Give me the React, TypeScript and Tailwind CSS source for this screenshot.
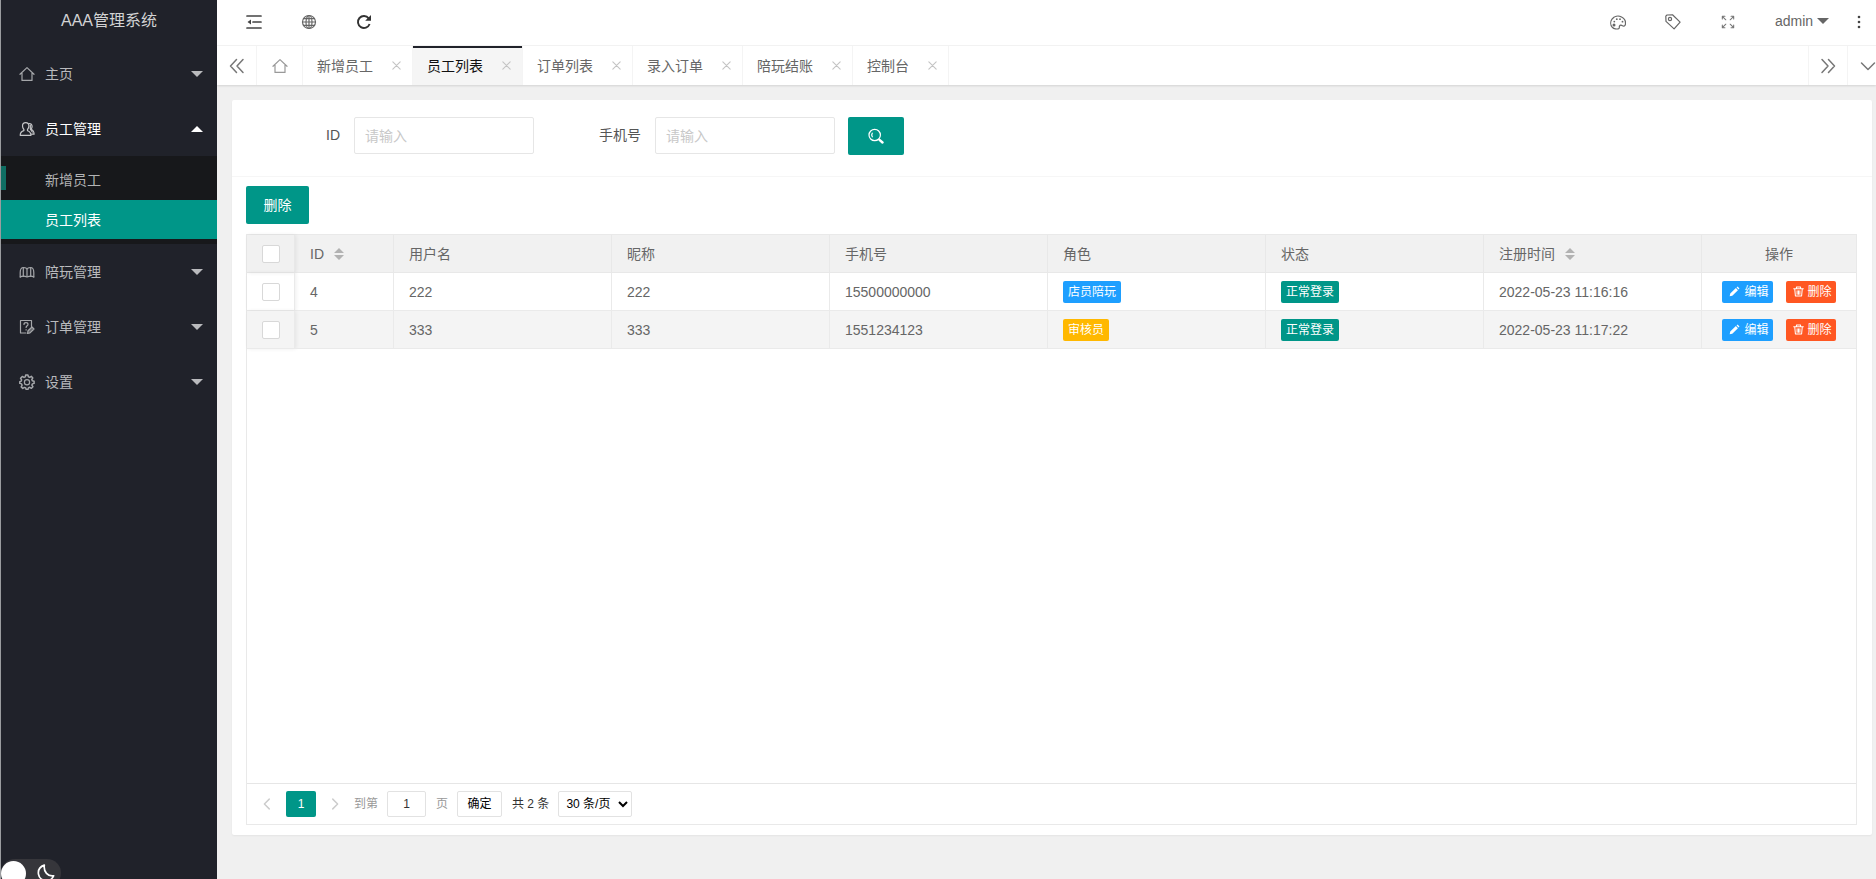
import React, { useState } from 'react';

interface User {
  id: number;
  username: string;
  nickname: string;
  phone: string;
  role: string;
  roleColor: string;
  status: string;
  createdAt: string;
}

const users: User[] = [
  { id: 4, username: '222', nickname: '222', phone: '15500000000', role: '店员陪玩', roleColor: 'bg-[#1e9fff]', status: '正常登录', createdAt: '2022-05-23 11:16:16' },
  { id: 5, username: '333', nickname: '333', phone: '1551234123', role: '审核员', roleColor: 'bg-[#ffb800]', status: '正常登录', createdAt: '2022-05-23 11:17:22' },
];

const tabs = ['新增员工', '员工列表', '订单列表', '录入订单', '陪玩结账', '控制台'];

interface IconProps {
  size?: number;
  className?: string;
  children: React.ReactNode;
}

const Icon: React.FC<IconProps> = ({ size = 16, className = '', children }) => (
  <svg
    width={size}
    height={size}
    viewBox="0 0 16 16"
    fill="none"
    stroke="currentColor"
    strokeWidth="1.2"
    strokeLinecap="round"
    strokeLinejoin="round"
    className={`shrink-0 ${className}`}
    aria-hidden="true"
  >
    {children}
  </svg>
);

const homePath = <path d="M1 8.3 8 1.6l7 6.7M3 7v7.4h10V7" />;

const icons = {
  home: homePath,
  users: (
    <>
      <path d="M6.7 1.7c2 0 3.2 1.4 3.2 3.4 0 1.5-.6 2.6-1.4 3.4v1.200c2.200.7 3.400 1.800 3.500 4.600H1.200c.1-2.800 1.300-3.900 3.700-4.600V8.500C4.100 7.700 3.500 6.600 3.500 5.100c0-2 1.200-3.400 3.200-3.400Z" />
      <path d="M10 2.500c1.900-.2 3.100 1.100 3.100 2.900 0 1.200-.5 2.100-1.200 2.800 2.200.8 3.100 2.200 3.200 5h-2.500" />
      <path d="M11.300 4v4l2 3" />
    </>
  ),
  book: (
    <>
      <path d="M1.200 13V8.500c0-3 1-5 3.300-5S8 4.500 8 6c0-1.500 1.200-2.500 3.500-2.500s3.300 2 3.300 5V13M8 6v6.500M4.300 4v8.500M11.700 4v8.500" />
      <path d="M1.200 13c1.500-1 4.800-1 6.800 0 2-1 5.300-1 6.800 0" />
    </>
  ),
  order: (
    <>
      <path d="M7 14H1.500V1.500h11v6" />
      <path d="M5 5.500C5 4.300 5.800 3.700 7 3.700s2 .7 2 1.700c0 1.300-1.900 1.400-1.900 3M7.100 10.700v.3" />
      <path fill="currentColor" fillOpacity="0.5" d="m8.500 14.500.5-2.700 4-3.800 2 2-4 3.900-2.500.6Z" />
    </>
  ),
  gear: (
    <>
      <path strokeWidth="1.500" d="m6.700 1-.4 1.900-1.300.5-1.700-1-1.700 1.900 1 1.600-.5 1.300L.8 7.600v1.800l1.800.5.5 1.300-.9 1.700 1.600 1.500 1.600-1 1.300.6.5 1.500h1.700l.5-1.600 1.300-.6 1.700 1 1.500-1.600-1-1.600.5-1.200 1.700-.5V7.300l-1.800-.5-.5-1.300 1-1.600-1.500-1.600-1.600 1-1.300-.5L8.900 1Z" />
      <circle cx="8" cy="8.300" r="2.600" />
    </>
  ),
};

const Caret = ({ up = false, className = '' }: { up?: boolean; className?: string }) => (
  <svg width="12" height="6" viewBox="0 0 12 6" fill="currentColor" className={`shrink-0 ${className}`} aria-hidden="true">
    <path d={up ? 'M0 6 6 0l6 6Z' : 'M0 0h12L6 6Z'} />
  </svg>
);

const SortIcon = () => (
  <svg width="10" height="12" viewBox="0 0 10 12" fill="#b2b2b2" aria-hidden="true">
    <path d="M0 5 5 0l5 5ZM0 7h10l-5 5Z" />
  </svg>
);

interface NavItemProps {
  icon: React.ReactNode;
  label: string;
  open?: boolean;
}

const NavItem: React.FC<NavItemProps> = ({ icon, label, open }) => (
  <button
    type="button"
    aria-expanded={!!open}
    className={`flex h-[55px] w-full items-center pr-3.5 pl-[18px] text-sm ${open ? 'text-white' : 'text-[#b9babd]'}`}
  >
    <Icon className={open ? 'text-[#c5c6c8]' : 'text-[#a5a7aa]'}>{icon}</Icon>
    <span className="ml-2.5">{label}</span>
    <Caret up={open} className="ml-auto" />
  </button>
);

const Sidebar = () => (
  <aside className="w-[217px] shrink-0 border-l border-[#9a9c9f] bg-[#20222a]">
    <div className="flex h-[46px] items-center justify-center pb-1 text-base text-[#d2d3d4]">AAA管理系统</div>
    <nav>
      <NavItem icon={icons.home} label="主页" />
      <NavItem icon={icons.users} label="员工管理" open />
      <div className="bg-[#17181b] pt-1 pb-[5px]">
        <a href="#add" className="relative flex h-10 items-center pl-11 text-sm text-[#b2b3b4]">
          <span className="absolute top-1.5 left-0 h-6 w-[5px] bg-[#0f6e63]" />
          新增员工
        </a>
        <a href="#list" className="flex h-[39px] items-center bg-[#009688] pl-11 text-sm text-white">员工列表</a>
      </div>
      <NavItem icon={icons.book} label="陪玩管理" />
      <NavItem icon={icons.order} label="订单管理" />
      <NavItem icon={icons.gear} label="设置" />
    </nav>
  </aside>
);

const HeaderButton = ({ label, children }: { label: string; children: React.ReactNode }) => (
  <button type="button" aria-label={label} className="flex h-full w-[55px] items-center justify-center">
    {children}
  </button>
);

const Header = () => (
  <header className="flex h-[46px] shrink-0 items-center border-b border-[#f4f4f4] bg-white pb-px pl-[9px] text-[#666]">
    <HeaderButton label="侧边伸缩">
      <Icon className="text-[#444]">
        <path strokeWidth="1.700" d="M1 2h14M7 8h8M1 14h14" />
        <path fill="currentColor" stroke="none" d="M5 5.500v5L1.500 8Z" />
      </Icon>
    </HeaderButton>
    <HeaderButton label="前台">
      <Icon className="text-[#666]">
        <circle cx="8" cy="8" r="6.500" />
        <ellipse cx="8" cy="8" rx="3" ry="6.500" />
        <path d="M8 1.500v13M1.500 8h13M2.500 4.700h11M2.500 11.300h11" />
      </Icon>
    </HeaderButton>
    <HeaderButton label="刷新">
      <Icon className="text-[#333]">
        <path strokeWidth="1.900" strokeLinecap="butt" d="M12.700 4.300A6 6 0 1 0 13.600 10" />
        <path fill="currentColor" stroke="none" d="M15 1v5.800H9.200Z" />
      </Icon>
    </HeaderButton>
    <div className="ml-auto flex h-full items-center">
      <HeaderButton label="主题">
        <Icon>
          <path d="M2.200 13.200C.3 11 .3 7.500 2 5.200 4.200 2.200 8.200 1.400 11.500 3c3 1.500 4.300 4.700 3.900 7.300-.3 1.800-1.700 2.300-2.900 1.500-1.200-.9-2.400-.8-3 .3-.5 1.200.3 1.900-.8 2.500-1.600.8-4.700.3-6.500-1.400Z" />
          <g fill="currentColor" stroke="none">
            <circle cx="4" cy="11" r="1.500" />
            <circle cx="4.300" cy="7.600" r=".9" />
            <circle cx="6.800" cy="5.200" r=".9" />
            <circle cx="10" cy="5.200" r=".9" />
            <circle cx="12.500" cy="7.700" r=".9" />
          </g>
        </Icon>
      </HeaderButton>
      <HeaderButton label="便签">
        <Icon>
          <path d="M.8 2.200 2 1l5.500-.2 7.600 7.300-6 6.800L1 7.400Z" />
          <circle cx="5" cy="5" r="1.600" />
        </Icon>
      </HeaderButton>
      <HeaderButton label="全屏">
        <Icon size={14} className="text-[#777]">
          <path d="M1.500 4.500v-3h3M1.500 1.500l4 4M11.500 1.500h3v3M14.500 1.500l-4 4M1.500 11.500v3h3M1.500 14.500l4-4M11.500 14.500h3v-3M14.500 14.500l-4-4" />
        </Icon>
      </HeaderButton>
      <button type="button" className="flex h-full w-[87px] items-center gap-1 pb-0.5 pl-5 text-sm">
        admin
        <Caret />
      </button>
      <button type="button" aria-label="更多" className="flex h-full w-[34px] items-center justify-center">
        <Icon className="text-[#444]">
          <g fill="currentColor" stroke="none">
            <circle cx="8" cy="3" r="1.300" />
            <circle cx="8" cy="8" r="1.300" />
            <circle cx="8" cy="13" r="1.300" />
          </g>
        </Icon>
      </button>
    </div>
  </header>
);

const TabBar = () => (
  <div className="z-10 flex h-[39px] shrink-0 bg-white text-sm text-[#666] shadow-[0_1px_2px_rgba(0,0,0,0.12)]">
    <button type="button" aria-label="向左" className="flex w-10 items-center justify-center border-r border-[#f4f4f4]">
      <Icon className="text-[#777]">
        <path strokeWidth="1.500" d="M7.500 1.500 1.500 8l6 6.500M14 1.500 8 8l6 6.500" />
      </Icon>
    </button>
    <button type="button" aria-label="首页" className="flex w-[46px] items-center justify-center border-r border-[#f4f4f4]">
      <Icon className="text-[#999]">{homePath}</Icon>
    </button>
    {tabs.map((tab) => {
      const active = tab === '员工列表';
      return (
        <div
          key={tab}
          className={`flex items-center gap-[19px] border-r border-[#f4f4f4] pr-[11px] pl-3.5 ${active ? 'bg-[#f5f5f5] text-[#111] shadow-[inset_0_2px_0_#20222a]' : ''}`}
        >
          <a href="#tab">{tab}</a>
          <button type="button" aria-label={`关闭${tab}`} className="text-[#c4c4c4]">
            <Icon size={9}>
              <path strokeWidth="2" d="m1.500 1.500 13 13M14.500 1.500l-13 13" />
            </Icon>
          </button>
        </div>
      );
    })}
    <button type="button" aria-label="向右" className="ml-auto flex w-10 items-center justify-center border-x border-[#f4f4f4]">
      <Icon className="text-[#777]">
        <path strokeWidth="1.500" d="m2 1.500 6 6.500-6 6.500M8.500 1.500l6 6.500-6 6.500" />
      </Icon>
    </button>
    <button type="button" aria-label="标签操作" className="flex w-7 items-center pl-3">
      <Icon className="text-[#777]">
        <path strokeWidth="1.500" d="m1.500 5 6.500 6.500L14.500 5" />
      </Icon>
    </button>
  </div>
);

const SearchForm = () => (
  <form className="flex items-start border-b border-[#f6f6f6] pt-[17px] pb-[21px] pl-px text-sm text-[#555]" onSubmit={(e) => e.preventDefault()}>
    <label htmlFor="user-id" className="w-[121px] pr-[14px] text-right leading-9">ID</label>
    <input id="user-id" type="text" placeholder="请输入" className="h-[37px] w-[180px] rounded-[2px] border border-[#e6e6e6] pl-2.5 outline-none placeholder:text-[#c8c8c8]" />
    <label htmlFor="user-phone" className="w-[121px] pr-[14px] text-right leading-9">手机号</label>
    <input id="user-phone" type="text" placeholder="请输入" className="h-[37px] w-[180px] rounded-[2px] border border-[#e6e6e6] pl-2.5 outline-none placeholder:text-[#c8c8c8]" />
    <button type="submit" aria-label="搜索" className="ml-[13px] flex h-[38px] w-14 items-center justify-center rounded-[2px] bg-[#009688] text-white">
      <Icon>
        <circle cx="6.700" cy="7" r="5.700" />
        <path d="M4.300 5.200c-.7 1-.7 2.500 0 3.600" />
        <path strokeWidth="2.400" d="m11.500 11.800 3 2.700" />
      </Icon>
    </button>
  </form>
);

const headCell = 'h-[38px] border-r border-b border-[#e8e8e8] px-[15px] text-left font-normal';
const bodyCell = 'h-[38px] border-r border-b border-[#eaeaea] px-[15px]';
const checkCell = 'shadow-[1px_0_4px_rgba(0,0,0,0.07)]';
const checkbox = 'block size-[18px] appearance-none rounded-[2px] border border-[#d8d8d8] bg-white checked:border-[#009688] checked:bg-[#009688]';
const badge = 'inline-flex h-[22px] items-center rounded-[2px] px-[5px] text-xs text-white';
const action = 'flex h-[22px] items-center gap-1 rounded-[2px] pr-1 pl-[7px] text-xs text-white';

const UserTable = () => {
  const [selected, setSelected] = useState<number[]>([]);

  const toggle = (id: number) => {
    setSelected(selected.includes(id) ? selected.filter((s) => s !== id) : [...selected, id]);
  };

  return (
    <table className="w-full table-fixed border-separate border-spacing-0 text-sm text-[#666]">
      <colgroup>
        <col className="w-12" />
        <col className="w-[99px]" />
        <col />
        <col />
        <col />
        <col />
        <col />
        <col />
        <col className="w-[154px]" />
      </colgroup>
      <thead className="bg-[#f1f1f1]">
        <tr>
          <th className={`${headCell} ${checkCell}`}>
            <input
              type="checkbox"
              aria-label="全选"
              className={checkbox}
              checked={selected.length === users.length}
              onChange={() => setSelected(selected.length === users.length ? [] : users.map((u) => u.id))}
            />
          </th>
          <th className={headCell}>
            <span className="flex items-center gap-2.5">ID <SortIcon /></span>
          </th>
          <th className={headCell}>用户名</th>
          <th className={headCell}>昵称</th>
          <th className={headCell}>手机号</th>
          <th className={headCell}>角色</th>
          <th className={headCell}>状态</th>
          <th className={headCell}>
            <span className="flex items-center gap-2.5">注册时间 <SortIcon /></span>
          </th>
          <th className="h-[38px] border-b border-[#e8e8e8] text-center font-normal">操作</th>
        </tr>
      </thead>
      <tbody>
        {users.map((u) => (
          <tr key={u.id} className="even:bg-[#f4f4f4]">
            <td className={`${bodyCell} ${checkCell}`}>
              <input type="checkbox" aria-label={`选择 ${u.id}`} className={checkbox} checked={selected.includes(u.id)} onChange={() => toggle(u.id)} />
            </td>
            <td className={bodyCell}>{u.id}</td>
            <td className={bodyCell}>{u.username}</td>
            <td className={bodyCell}>{u.nickname}</td>
            <td className={bodyCell}>{u.phone}</td>
            <td className={bodyCell}>
              <div className="flex"><span className={`${badge} ${u.roleColor}`}>{u.role}</span></div>
            </td>
            <td className={bodyCell}>
              <div className="flex"><span className={`${badge} bg-[#009688]`}>{u.status}</span></div>
            </td>
            <td className={bodyCell}>{u.createdAt}</td>
            <td className="h-[38px] border-b border-[#eaeaea]">
              <div className="flex justify-center gap-[13px]">
                <button type="button" className={`${action} bg-[#1e9fff]`}>
                  <Icon size={11}>
                    <path fill="currentColor" stroke="none" d="m1 15 .8-4L10 3l3 3-8.200 8.200ZM11 2l1.500-1.200 2.700 2.700L14 5Z" />
                  </Icon>
                  编辑
                </button>
                <button type="button" className={`${action} bg-[#ff5722]`}>
                  <Icon size={11}>
                    <path strokeWidth="1.500" d="M1 4h14M5 4V1.500h6V4M2.500 4 3.500 14.500h9L13.500 4M6 7v5M8 7v5M10 7v5" />
                  </Icon>
                  删除
                </button>
              </div>
            </td>
          </tr>
        ))}
      </tbody>
    </table>
  );
};

const Pagination = () => (
  <div className="flex h-[41px] items-center border-t border-[#e6e6e6] pl-3.5 text-xs text-[#333]">
    <button type="button" aria-label="上一页" className="text-[#ccc]">
      <Icon size={12}>
        <path strokeWidth="1.900" d="M11 1.500 4.500 8l6.500 6.500" />
      </Icon>
    </button>
    <button type="button" className="ml-[13px] h-[26px] w-[30px] rounded-[2px] bg-[#009688] text-white">1</button>
    <button type="button" aria-label="下一页" className="ml-[13px] text-[#ccc]">
      <Icon size={12}>
        <path strokeWidth="1.900" d="M5 1.500 11.500 8 5 14.500" />
      </Icon>
    </button>
    <label htmlFor="page-no" className="ml-[13px] text-[#999]">到第</label>
    <input id="page-no" type="text" defaultValue="1" className="ml-[9px] h-[26px] w-[39px] rounded-[2px] border border-[#e2e2e2] text-center outline-none" />
    <span className="ml-[10px] text-[#999]">页</span>
    <button type="button" className="ml-[9px] h-[26px] w-[45px] rounded-[2px] border border-[#e2e2e2] text-black">确定</button>
    <span className="ml-[10px]">共 2 条</span>
    <select aria-label="每页条数" className="ml-[9px] h-[26px] w-[74px] rounded-[2px] border border-[#e2e2e2] bg-white pl-[3px] text-black">
      <option>30 条/页</option>
      <option>60 条/页</option>
      <option>90 条/页</option>
    </select>
  </div>
);

const ThemeToggle = () => (
  <button type="button" aria-label="夜间模式" className="fixed -bottom-2 left-px flex h-7 w-[60px] items-center justify-between rounded-full bg-[#36363b] pr-1.5 text-white">
    <span className="size-[25px] rounded-full bg-white" />
    <Icon size={18}>
      <path strokeWidth="1.500" d="M6.500 1C2.800 2.300.8 5.500 1.300 9c.6 3.700 3.700 6.200 7.500 5.900 2.700-.2 5-1.800 6-4.400-5 .8-9.200-3.500-8.300-9.500Z" />
    </Icon>
  </button>
);

export default function App() {
  return (
    <div className="flex h-screen overflow-hidden bg-[#f0f0f0] font-['Liberation_Sans','Noto_Sans_CJK_SC',sans-serif]">
      <Sidebar />
      <div className="flex min-w-0 flex-1 flex-col">
        <Header />
        <TabBar />
        <main className="flex min-h-0 flex-1 flex-col pt-[15px] pr-1 pb-11 pl-[15px]">
          <section className="flex flex-1 flex-col rounded-[2px] bg-white shadow-[0_1px_2px_rgba(0,0,0,0.05)]">
            <SearchForm />
            <div className="flex flex-1 flex-col pt-[9px] pr-[15px] pb-2.5 pl-3.5">
              <div className="flex">
                <button type="button" className="h-[38px] w-[63px] rounded-[2px] bg-[#009688] text-sm text-white">删除</button>
              </div>
              <div className="mt-2.5 flex flex-1 flex-col justify-between border border-[#e9e9e9]">
                <UserTable />
                <Pagination />
              </div>
            </div>
          </section>
        </main>
      </div>
      <ThemeToggle />
    </div>
  );
}
